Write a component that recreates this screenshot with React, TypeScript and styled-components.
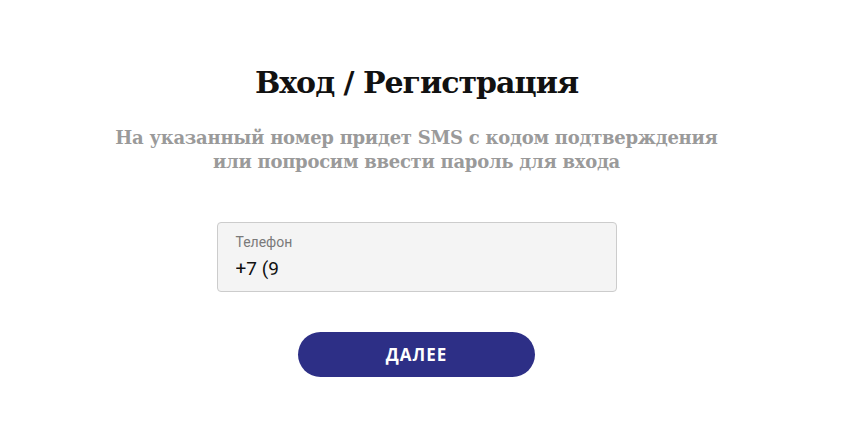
import styled, { createGlobalStyle } from "styled-components";

const GlobalStyle = createGlobalStyle`
    html, body {
        margin: 0;
        padding: 0;
        background: #ffffff;
    }
    body {
        font-family: "Roboto", "Liberation Sans", sans-serif;
    }
`;

const Page = styled.main`
    width: 833px;
    display: flex;
    flex-direction: column;
    align-items: center;
    padding-top: 63px;
`;

const Title = styled.h1`
    margin: 0;
    font-family: "DejaVu Serif", "Liberation Serif", serif;
    font-size: 30px;
    font-weight: 700;
    line-height: 40px;
    color: #111111;
    letter-spacing: -1px;
`;

const Subtitle = styled.p`
    margin: 23px 0 0;
    font-family: "DejaVu Serif", "Liberation Serif", serif;
    font-size: 18px;
    font-weight: 700;
    line-height: 24px;
    color: #9a9a9a;
    text-align: center;
    letter-spacing: -0.27px;
`;

const Field = styled.label`
    margin-top: 48px;
    width: 400px;
    height: 70px;
    box-sizing: border-box;
    display: flex;
    flex-direction: column;
    justify-content: center;
    padding: 0 18px;
    background: #f4f4f4;
    border: 1px solid #cccccc;
    border-radius: 4px;
`;

const FieldLabel = styled.span`
    font-family: "Roboto", sans-serif;
    font-size: 14px;
    line-height: 18px;
    color: #7a7a7a;
`;

const FieldValue = styled.input`
    margin-top: 6px;
    padding: 0;
    border: none;
    outline: none;
    background: transparent;
    font-family: "Roboto", sans-serif;
    font-size: 19px;
    line-height: 24px;
    color: #111111;
`;

const NextButton = styled.button`
    margin-top: 40px;
    width: 237px;
    height: 45px;
    border: none;
    border-radius: 23px;
    background: #2d2f86;
    color: #ffffff;
    font-family: "Open Sans", sans-serif;
    font-size: 17px;
    font-weight: 700;
    letter-spacing: 1px;
    cursor: pointer;
`;

function App() {
    return (
        <>
            <GlobalStyle />
            <Page>
                <Title>Вход / Регистрация</Title>
                <Subtitle>
                    На указанный номер придет SMS с кодом подтверждения
                    <br />
                    или попросим ввести пароль для входа
                </Subtitle>
                <Field>
                    <FieldLabel>Телефон</FieldLabel>
                    <FieldValue defaultValue="+7 (9" />
                </Field>
                <NextButton>ДАЛЕЕ</NextButton>
            </Page>
        </>
    );
}

export default App;
